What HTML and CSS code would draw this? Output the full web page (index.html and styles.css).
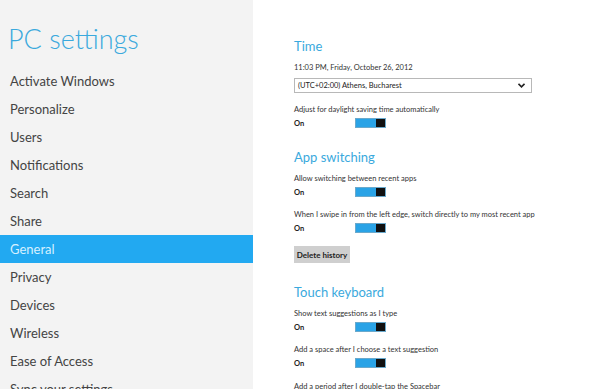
FILE: index.html
```
<!DOCTYPE html>
<html>
<head>
<meta charset="utf-8">
<link rel="stylesheet" href="styles.css">
</head>
<body>
<div class="app">
  <nav class="side">
    <h1 class="title">PC settings</h1>
    <ul class="nav">
      <li>Activate Windows</li>
      <li>Personalize</li>
      <li>Users</li>
      <li>Notifications</li>
      <li>Search</li>
      <li>Share</li>
      <li class="active">General</li>
      <li>Privacy</li>
      <li>Devices</li>
      <li>Wireless</li>
      <li>Ease of Access</li>
      <li>Sync your settings</li>
    </ul>
  </nav>
  <main class="content">
    <h2 class="heading">Time</h2>
    <div class="date">11:03 PM, Friday, October 26, 2012</div>
    <div class="select">
      <span>(UTC+02:00) Athens, Bucharest</span>
      <svg class="chev" width="7" height="5" viewBox="0 0 7 5"><path d="M0.5 0.8 L3.5 3.8 L6.5 0.8" fill="none" stroke="#222" stroke-width="1.6"/></svg>
    </div>
    <div class="setting first-after-select">
      <div class="label">Adjust for daylight saving time automatically</div>
      <div class="onrow"><span class="on">On</span><span class="toggle"><span class="thumb"></span></span></div>
    </div>

    <h2 class="heading h-app">App switching</h2>
    <div class="setting first">
      <div class="label">Allow switching between recent apps</div>
      <div class="onrow"><span class="on">On</span><span class="toggle"><span class="thumb"></span></span></div>
    </div>
    <div class="setting">
      <div class="label">When I swipe in from the left edge, switch directly to my most recent app</div>
      <div class="onrow"><span class="on">On</span><span class="toggle"><span class="thumb"></span></span></div>
    </div>
    <button class="btn">Delete history</button>

    <h2 class="heading h-touch">Touch keyboard</h2>
    <div class="setting first">
      <div class="label">Show text suggestions as I type</div>
      <div class="onrow"><span class="on">On</span><span class="toggle"><span class="thumb"></span></span></div>
    </div>
    <div class="setting">
      <div class="label">Add a space after I choose a text suggestion</div>
      <div class="onrow"><span class="on">On</span><span class="toggle"><span class="thumb"></span></span></div>
    </div>
    <div class="setting last">
      <div class="label">Add a period after I double-tap the Spacebar</div>
    </div>
  </main>
</div>
</body>
</html>
```
FILE: styles.css
```
* { box-sizing: border-box; }
html, body {
  margin: 0;
  padding: 0;
  height: 100%;
  overflow: hidden;
  background: #ffffff;
}
body {
  font-family: "Lato", "Open Sans", sans-serif;
  color: #333;
}
.app {
  display: flex;
  height: 389px;
}
.side {
  width: 253px;
  flex: none;
  background: #f3f3f3;
  height: 100%;
}
.title {
  margin: 0;
  height: 67px;
  padding: 22px 0 0 8px;
  font-family: "Lato", "Open Sans", sans-serif;
  font-weight: 300;
  font-size: 27px;
  line-height: 34px;
  color: #3aa9dd;
}
.nav {
  list-style: none;
  margin: 0;
  padding: 0;
}
.nav li {
  height: 28px;
  line-height: 28px;
  padding-left: 10px;
  font-size: 13px;
  color: #444;
}
.nav li.active {
  background: #22a9f1;
  color: #d6f0ff;
}
.content {
  flex: 1;
  padding: 36px 0 0 41px;
  font-size: 7.5px;
}
.heading {
  margin: 0;
  height: 20px;
  line-height: 20px;
  font-family: "Lato", "Open Sans", sans-serif;
  font-weight: 400;
  font-size: 13px;
  color: #3aa9dd;
}
.date {
  margin-top: 6px;
  line-height: 12px;
  height: 12px;
  color: #333;
}
.select {
  margin-top: 4px;
  width: 238px;
  height: 15px;
  border: 1px solid #b8b8b8;
  display: flex;
  align-items: center;
  justify-content: space-between;
  padding: 0 6px 0 3px;
  color: #222;
}
.chev { display: block; }
.setting { margin-top: 10px; }
.setting.first { margin-top: 6px; }
.setting.first-after-select { margin-top: 11px; }
.label {
  line-height: 12px;
  height: 12px;
  color: #333;
}
.onrow {
  height: 14px;
  display: flex;
  align-items: center;
}
.on {
  width: 61px;
  font-weight: 700;
  color: #222;
}
.toggle {
  width: 31px;
  height: 10px;
  background: #2aa3e6;
  border: 1px solid #6aa9cc;
  display: flex;
  justify-content: flex-end;
}
.thumb {
  width: 9px;
  height: 100%;
  background: #111;
}
.h-app { margin-top: 17px; }
.h-touch { margin-top: 19px; }
.btn {
  display: block;
  margin-top: 11px;
  height: 17px;
  width: 56px;
  padding: 0;
  border: none;
  background: #cfcfcf;
  font-family: "Lato", "Open Sans", sans-serif;
  font-size: 8px;
  font-weight: 700;
  color: #222;
}
.setting.last { margin-top: 11px; }
```
